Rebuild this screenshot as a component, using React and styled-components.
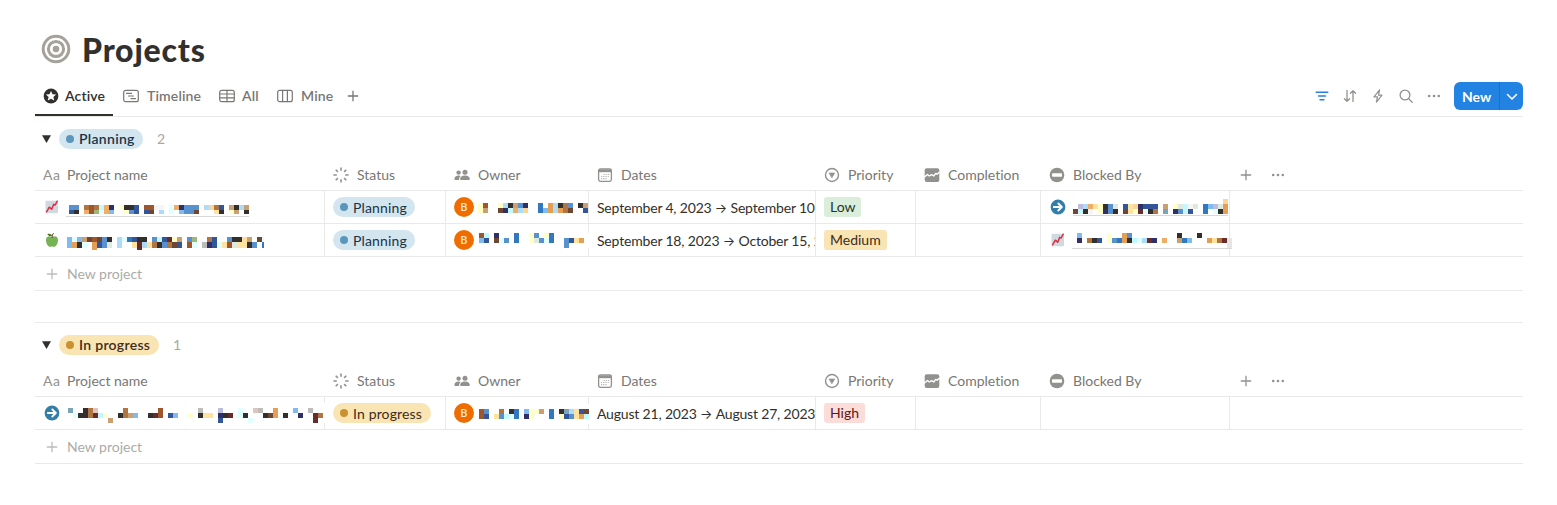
import styled, { createGlobalStyle } from "styled-components";

const GlobalStyle = createGlobalStyle`
  * { box-sizing: border-box; }
  body {
    margin: 0;
    background: #ffffff;
    color: #32302c;
    font-family: Lato, "Open Sans", sans-serif;
    font-size: 14px;
    font-variant-ligatures: none;
  }
  svg { display: block; flex-shrink: 0; }
`;

const Page = styled.main`
  padding: 27px 34px 0 35px;
  height: 505px;
  overflow: hidden;
`;

const TitleRow = styled.header`
  display: flex;
  align-items: center;
  gap: 11px;
  height: 49px;
  padding: 0 0 5px 6px;
`;

const Title = styled.h1`
  margin: 0;
  padding-top: 2px;
  font-size: 32px;
  line-height: 40px;
  font-weight: 900;
  letter-spacing: 0.8px;
`;

const Toolbar = styled.div`
  display: flex;
  justify-content: space-between;
  height: 41px;
  border-bottom: 1px solid #e9e9e7;
`;

const Tabs = styled.nav`
  display: flex;
  margin-bottom: -1px;
`;

const Tab = styled.div`
  display: flex;
  align-items: center;
  gap: ${({ $gap }) => $gap || 8}px;
  width: ${({ $width }) => $width}px;
  margin-left: ${({ $offset }) => $offset || 0}px;
  padding: 1px 0 0 8px;
  height: 40px;
  color: ${({ $active }) => ($active ? "#32302c" : "#787774")};
  border-bottom: 2px solid ${({ $active }) => ($active ? "#32302c" : "transparent")};
  font-weight: 600;
  letter-spacing: 0.15px;
`;

const Actions = styled.div`
  display: flex;
  align-items: center;
  gap: 12px;
  height: 40px;
  color: #91918e;
`;

const NewButton = styled.div`
  display: flex;
  width: 69px;
  height: 28px;
  border-radius: 6px;
  overflow: hidden;
  background: #2383e2;
  color: #ffffff;
  font-weight: 700;
  line-height: 29px;
`;

const NewLabel = styled.span`
  width: 46px;
  padding-left: 8px;
  border-right: 1px solid #1e70c2;
`;

const NewArrow = styled.span`
  display: flex;
  flex: 1;
  align-items: center;
  justify-content: center;
  padding-top: 2px;
`;

const Group = styled.section`
  height: 206px;
  border-bottom: ${({ $last }) => ($last ? "0" : "1px solid #e9e9e7")};
`;

const GroupHeader = styled.div`
  display: flex;
  align-items: center;
  height: 43px;
  padding-left: 6px;
`;

const Count = styled.span`
  margin-left: 14px;
  color: #a8a7a4;
`;

const tones = {
  blue: { bg: "#d3e5ef", dot: "#5b97bd", text: "#183347" },
  yellow: { bg: "#f9e4b3", dot: "#cb912f", text: "#402c1b" },
  green: { bg: "#dbeddb", text: "#1c3829" },
  amber: { bg: "#f9e4b3", text: "#402c1b" },
  red: { bg: "#fcdcd9", text: "#5d1715" },
};

const Pill = styled.span`
  display: inline-flex;
  align-items: center;
  gap: 5px;
  height: 20px;
  width: ${({ $width }) => $width}px;
  margin-left: ${({ $offset }) => $offset || 0}px;
  padding-left: 7px;
  border-radius: 10px;
  white-space: nowrap;
  background: ${({ $tone }) => tones[$tone].bg};
  color: ${({ $tone }) => tones[$tone].text};
  font-weight: ${({ $strong }) => ($strong ? 600 : 400)};
  letter-spacing: ${({ $strong }) => ($strong ? 0.3 : 0.15)}px;

  &::before {
    content: "";
    width: 8px;
    height: 8px;
    border-radius: 50%;
    background: ${({ $tone }) => tones[$tone].dot};
  }
`;

const Tag = styled.span`
  height: 20px;
  width: ${({ $width }) => $width}px;
  padding-left: 6px;
  border-radius: 3px;
  line-height: 20px;
  background: ${({ $tone }) => tones[$tone].bg};
  color: ${({ $tone }) => tones[$tone].text};
`;

const columns = "290px 121px 143px 227px 100px 125px 189px 1fr";

const HeadRow = styled.div`
  display: grid;
  grid-template-columns: ${columns};
  height: 31px;
  border-bottom: 1px solid #e9e9e7;
  color: #787774;
`;

const HeadCell = styled.div`
  display: flex;
  align-items: center;
  gap: ${({ $gap }) => $gap || 8}px;
  padding: 0 0 1px ${({ $pad }) => $pad ?? 8}px;

  svg { color: #91918e; }
`;

const TypeGlyph = styled.span`
  width: 18px;
  color: #91918e;
  letter-spacing: 0.4px;
`;

const Row = styled.div`
  display: grid;
  grid-template-columns: ${columns};
  height: 33px;
  border-bottom: 1px solid #e9e9e7;
`;

const Cell = styled.div`
  display: flex;
  align-items: center;
  min-width: 0;
  padding-left: 8px;
  white-space: nowrap;
  border-right: ${({ $open }) => ($open ? "0" : "1px solid #e9e9e7")};
  overflow: ${({ $clip }) => ($clip ? "hidden" : "visible")};
`;

const DateText = styled.span`
  display: flex;
  gap: 4px;
  padding-top: 2px;
  line-height: 18px;
  letter-spacing: -0.18px;
`;

const DateArrow = styled.span`
  display: flex;
  justify-content: center;
  width: 11px;
  font-family: Inter, sans-serif;
  font-size: 13px;
  letter-spacing: 0;
`;

const Avatar = styled.span`
  display: flex;
  align-items: center;
  justify-content: center;
  flex-shrink: 0;
  width: 20px;
  height: 20px;
  border-radius: 50%;
  background: #ef6c00;
  color: #ffe4cc;
  font-family: Roboto, sans-serif;
  font-size: 11px;
  font-weight: 500;
`;

const Redacted = styled.span`
  position: relative;
  z-index: 1;
  align-self: flex-start;
  flex-shrink: 0;
  height: ${({ $height }) => $height || 22}px;
  margin-top: ${({ $top }) => $top}px;
  margin-left: ${({ $left }) => $left}px;
  padding: ${({ $inset }) => $inset || "0"};
  background: ${({ $cover }) => ($cover ? "#ffffff" : "transparent")};
  border-bottom: ${({ $underline }) => ($underline ? "1px solid #d9d8d6" : "0")};
`;

const NewRow = styled.div`
  display: flex;
  align-items: center;
  gap: 9px;
  height: 34px;
  padding-left: 11px;
  border-bottom: 1px solid #e9e9e7;
  color: #acaba9;

  svg { color: #bdbcba; }
`;

const palette = {
  k: "#322f2c", b: "#5791d0", B: "#3278c0", n: "#303068", N: "#33569b",
  l: "#80bbf0", c: "#c2f8ff", C: "#e0ffff", o: "#f0ad66", O: "#e49f55",
  p: "#fbd49a", r: "#b07540", R: "#a0562b", d: "#6f4631", m: "#682d2a",
  y: "#ffffc8", Y: "#ffe2a0", g: "#9db878", e: "#dfe9e0", s: "#aedcf8",
  t: "#cba070", w: "#f8f4f4", x: "#bcbcb8", z: "#bcbcde", q: "#78a6b8",
  i: "#dfc5bd", a: "#e6e6e4",
};

// Each string is one line of 5px blocks, a dot leaves the block empty.
function Mosaic({ lines, tops = [0, 5, 10], width }) {
  return (
    <svg width={width || lines[0].length * 5} height={tops[tops.length - 1] + 5} shapeRendering="crispEdges">
      {lines.map((line, y) =>
        line.split("").map((code, x) =>
          code === "." ? null : (
            <rect
              key={`${x}-${y}`}
              x={x * 5}
              y={tops[y]}
              width="5"
              height={(tops[y + 1] ?? tops[y] + 5) - tops[y]}
              fill={palette[code]}
            />
          )
        )
      )}
    </svg>
  );
}

const Svg = ({ size = 16, height, children, ...rest }) => (
  <svg
    width={size}
    height={height || size}
    viewBox={`0 0 ${size} ${height || size}`}
    fill="none"
    stroke="currentColor"
    strokeWidth="1.3"
    strokeLinecap="round"
    strokeLinejoin="round"
    {...rest}
  >
    {children}
  </svg>
);

const TargetIcon = () => (
  <Svg size={30} stroke="#a5a299" strokeWidth="3">
    <circle cx="15" cy="15" r="12.8" />
    <circle cx="15" cy="15" r="7.6" />
    <circle cx="15" cy="15" r="3.3" fill="#a5a299" stroke="none" />
  </Svg>
);

const StarIcon = () => (
  <Svg stroke="none">
    <circle cx="8" cy="8" r="7.4" fill="#32302c" />
    <path d="M8 2.9l1.5 3.3 3.6.4-2.7 2.4.8 3.6L8 10.8l-3.2 1.8.8-3.6-2.7-2.4 3.6-.4z" fill="#fff" />
  </Svg>
);

const TimelineIcon = () => (
  <Svg strokeWidth="1.2">
    <rect x="0.7" y="2.3" width="14.6" height="11.4" rx="2" />
    <path d="M3.5 5.4h5M5.5 8h5M8 10.6h4.5" />
  </Svg>
);

const TableIcon = () => (
  <Svg strokeWidth="1.2">
    <rect x="0.7" y="2.3" width="14.6" height="11.4" rx="2" />
    <path d="M.8 6h14.4M.8 9.8h14.4M8 2.4v11.2" />
  </Svg>
);

const BoardIcon = () => (
  <Svg strokeWidth="1.2">
    <rect x="0.7" y="2.3" width="14.6" height="11.4" rx="2" />
    <path d="M5.6 2.4v11.2M10.4 2.4v11.2" />
  </Svg>
);

const PlusIcon = () => (
  <Svg size={12} strokeLinecap="butt">
    <path d="M6 .8v10.4M.8 6h10.4" />
  </Svg>
);

const FilterIcon = () => (
  <Svg stroke="#2383e2" strokeWidth="1.4">
    <path d="M2.2 4.2h11.6M4.5 8h7M6 11.8h4" />
  </Svg>
);

const SortIcon = () => (
  <Svg strokeWidth="1.3">
    <path d="M5 2.5v10.8M2.4 10.7L5 13.3l2.6-2.6M11 13.5V2.7M8.4 5.3L11 2.7l2.6 2.6" />
  </Svg>
);

const BoltIcon = () => (
  <Svg strokeWidth="1.2">
    <path d="M9.6 1.8L4 8.9h3.5l-1.1 5.3L12 7.1H8.5z" />
  </Svg>
);

const SearchIcon = () => (
  <Svg strokeWidth="1.3">
    <circle cx="7" cy="7" r="4.9" />
    <path d="M10.6 10.6l3.6 3.6" />
  </Svg>
);

const DotsIcon = () => (
  <Svg stroke="none" fill="currentColor">
    <circle cx="3.2" cy="8" r="1.3" />
    <circle cx="8" cy="8" r="1.3" />
    <circle cx="12.8" cy="8" r="1.3" />
  </Svg>
);

const StatusIcon = () => (
  <Svg strokeWidth="1.6" strokeLinecap="butt">
    <path d="M8 .4v3.4M8 12.2v3.4M.4 8h3.4M12.2 8h3.4M2.7 2.7l2.2 2.2M11.1 11.1l2.2 2.2M2.7 13.3l2.2-2.2M11.1 4.9l2.2-2.2" />
  </Svg>
);

const PeopleIcon = () => (
  <Svg stroke="none" fill="currentColor">
    <circle cx="4.6" cy="5.6" r="2.2" />
    <circle cx="11" cy="5.2" r="2.5" />
    <path d="M.4 12.2c0-2.2 1.7-3.6 4.2-3.6.8 0 1.5.2 2.1.5-1 .8-1.6 1.9-1.7 3.8H1.2c-.5 0-.8-.2-.8-.7zM6 12.1c0-2.3 2-3.7 5-3.7s4.9 1.4 4.9 3.7c0 .5-.3.8-.8.8H6.8c-.5 0-.8-.3-.8-.8z" />
  </Svg>
);

const CalendarIcon = () => (
  <Svg strokeWidth="1.3">
    <rect x="1.6" y="2" width="12.8" height="12.3" rx="1.8" />
    <path d="M1.6 3.9h12.8" strokeWidth="2.6" strokeLinecap="butt" />
    <path d="M6.5 7.5h6M4 9.5h8.5M4 11.7h6" strokeWidth="1.2" strokeDasharray="1.2 1" strokeLinecap="butt" opacity="0.7" />
  </Svg>
);

const SelectIcon = () => (
  <Svg strokeWidth="1.4">
    <circle cx="8" cy="8" r="6.5" />
    <path d="M5.4 6.1h5.2L8 10.4z" fill="currentColor" strokeWidth="0.8" />
  </Svg>
);

const RollupIcon = () => (
  <Svg stroke="none">
    <rect x="0.7" y="1.3" width="14.6" height="13.7" rx="2" fill="currentColor" />
    <path d="M.7 9.8L3.4 7.5l1.9 1.5 2.4-1.3 2 1.3 2-2.6 1.4.8 2.2-2" stroke="#fff" strokeWidth="1.4" />
  </Svg>
);

const BlockedIcon = () => (
  <Svg stroke="none">
    <circle cx="8" cy="8" r="7.3" fill="currentColor" />
    <rect x="3" y="6.2" width="10" height="3.6" rx="0.8" fill="#fff" />
  </Svg>
);

const ChartEmoji = () => (
  <Svg size={14} strokeWidth="1.5">
    <rect x="0.5" y="0.8" width="12.5" height="12.4" rx="1" fill="#cfd9df" stroke="none" />
    <path d="M1.6 11.8l2.7-4.6 2.4 2 2-4.8 1.5.6 2-3.8" stroke="#dd2e44" />
  </Svg>
);

const AppleEmoji = () => (
  <Svg size={14} stroke="none">
    <path d="M7 4c1.7-1.2 6-1.4 6 3 0 3.4-2 6.8-4 6.8-.9 0-1.2-.4-2-.4s-1.1.4-2 .4c-2 0-4-3.4-4-6.8 0-4.400 4.300-4.200 6-3z" fill="#77b255" />
    <path d="M7.2 4.4C7 2.8 7.4 1.5 8.3.5" stroke="#662113" strokeWidth="1" />
    <path d="M2.4 1.2c1.8-.8 4-.1 4.800 1.800-2 .4-3.900-.2-4.800-1.800z" fill="#3e721d" />
  </Svg>
);

const ArrowEmoji = () => (
  <Svg strokeWidth="1.8">
    <circle cx="8" cy="8" r="7.4" fill="#337ea9" stroke="none" />
    <path d="M3.8 8h8M8.3 4.5L11.9 8l-3.6 3.5" stroke="#fff" />
  </Svg>
);

const headings = [
  { label: "Status", Icon: StatusIcon },
  { label: "Owner", Icon: PeopleIcon },
  { label: "Dates", Icon: CalendarIcon },
  { label: "Priority", Icon: SelectIcon },
  { label: "Completion", Icon: RollupIcon },
  { label: "Blocked By", Icon: BlockedIcon },
];

const TableHead = () => (
  <HeadRow>
    <HeadCell $gap={6}><TypeGlyph>Aa</TypeGlyph>Project name</HeadCell>
    {headings.map(({ label, Icon }) => (
      <HeadCell key={label}><Icon />{label}</HeadCell>
    ))}
    <HeadCell $pad={10} $gap={18}>
      <PlusIcon />
      <DotsIcon />
    </HeadCell>
  </HeadRow>
);

const planning = [
  {
    Icon: ChartEmoji,
    name: {
      lines: ["bb.rRrcon.ykkN.RRww.Conbbb.sprN.tkst", "Nk.oRgCol..ybN.Nd.s.C.lbbd...Yk.yt.k"],
      tops: [0, 5, 9], left: 6, top: 11, inset: "3px 0 0 3px", height: 15, underline: true,
    },
    owner: { lines: ["yR..ysktbn..B.Oskrb.kt", "yt..dncosp..BlOsOrd..N"], left: 4, top: 12, height: 10 },
    dates: ["September 4, 2023", "September 10, 2023"],
    tag: ["Low", "green", 37],
    blocked: {
      Icon: ArrowEmoji,
      lines: ["..............................p", ".zsoYykbe.NYpnNNN.t.yecwe.BlzeO", "dckw.ynbk.dYymCkr.q.nbcN..B.CkO"],
      left: 7, top: 8, height: 17, underline: true,
    },
  },
  {
    Icon: AppleEmoji,
    name: {
      lines: ["lCltdRdbk.sCBNkk.bcNmyt.bg..rN..bkkYt.dC", "lOkC.ONbe.s..YmsYrkbrdN.RC.xnNCYReYYkb.B", ".....O........m........................."],
      tops: [0, 5, 11, 13], left: 7, top: 13, height: 15, width: 197,
    },
    owner: {
      lines: ["Rc.n...B..yb.yB......", "lN.dCb.B..yebCB..bNYO", ".................b..."],
      left: 5, top: 9, height: 15, cover: true, inset: "0 5px 0 0",
    },
    dates: ["September 18, 2023", "October 15, 2023"],
    tag: ["Medium", "amber", 63],
    blocked: {
      Icon: ChartEmoji,
      lines: [".l.....y..Ob.........k...k......", ".n.rkN.ybBOkcCsmn.o..tBl...OYrma", "...............................a"],
      left: 6, top: 9, height: 16, underline: true,
    },
  },
];

const inProgress = [
  {
    Icon: ArrowEmoji,
    name: {
      lines: [
        "q..kri.....r......R.......x...z...C..ix..O...l..x..",
        ".Ckkrmcy..krtl..kmR.Nl..y.kYY.nkm.Ck...kdO.k..n..mr",
        "........t.....................N.....C............m.",
      ],
      left: 8, top: 6, height: 20, inset: "5px 2px 0 0", cover: true,
    },
    owner: { lines: ["Rb..r.kB.lyyt.B.kqsYNd", "RN.YbcCB.ny...B.yNbYOc"], left: 5, top: 7, height: 20, inset: "5px 1px 0 0", cover: true },
    dates: ["August 21, 2023", "August 27, 2023"],
    tag: ["High", "red", 41],
  },
];

const Hidden = ({ data }) => (
  <Redacted
    $left={data.left}
    $top={data.top}
    $height={data.height}
    $inset={data.inset}
    $cover={data.cover}
    $underline={data.underline}
  >
    <Mosaic lines={data.lines} tops={data.tops} width={data.width} />
  </Redacted>
);

const IconSlot = styled.span`
  display: flex;
  justify-content: center;
  width: 16px;
  margin-left: 1px;
  flex-shrink: 0;
`;

function ProjectGroup({ label, tone, width, rows, last }) {
  return (
    <Group $last={last}>
      <GroupHeader>
        <Svg size={10} height={8} stroke="none"><path d="M1 .3h9L5.5 8z" fill="#32302c" /></Svg>
        <Pill $tone={tone} $width={width.header} $offset={8} $strong>{label}</Pill>
        <Count>{rows.length}</Count>
      </GroupHeader>
      <TableHead />
      {rows.map(({ Icon, name, owner, dates, tag, blocked }) => (
        <Row key={dates[0]}>
          <Cell><IconSlot><Icon /></IconSlot><Hidden data={name} /></Cell>
          <Cell><Pill $tone={tone} $width={width.cell}>{label}</Pill></Cell>
          <Cell><Avatar>B</Avatar><Hidden data={owner} /></Cell>
          <Cell $clip>
            <DateText>
              <span>{dates[0]}</span>
              <DateArrow>→</DateArrow>
              <span>{dates[1]}</span>
            </DateText>
          </Cell>
          <Cell><Tag $tone={tag[1]} $width={tag[2]}>{tag[0]}</Tag></Cell>
          <Cell />
          <Cell>
            {blocked && (
              <>
                <IconSlot><blocked.Icon /></IconSlot>
                <Hidden data={blocked} />
              </>
            )}
          </Cell>
          <Cell $open />
        </Row>
      ))}
      <NewRow><PlusIcon />New project</NewRow>
    </Group>
  );
}

export default function App() {
  return (
    <>
      <GlobalStyle />
      <Page>
        <TitleRow>
          <TargetIcon />
          <Title>Projects</Title>
        </TitleRow>
        <Toolbar>
          <Tabs>
            <Tab $active $width={78} $gap={6}><StarIcon />Active</Tab>
            <Tab $offset={2} $width={96}><TimelineIcon />Timeline</Tab>
            <Tab $width={58} $gap={7}><TableIcon />All</Tab>
            <Tab $width={70}><BoardIcon />Mine</Tab>
            <Tab $width={30}><PlusIcon /></Tab>
          </Tabs>
          <Actions>
            <FilterIcon />
            <SortIcon />
            <BoltIcon />
            <SearchIcon />
            <DotsIcon />
            <NewButton>
              <NewLabel>New</NewLabel>
              <NewArrow>
                <Svg size={12} height={8} strokeWidth="1.6"><path d="M1.5 1.5L6 6l4.5-4.5" /></Svg>
              </NewArrow>
            </NewButton>
          </Actions>
        </Toolbar>
        <ProjectGroup label="Planning" tone="blue" width={{ header: 84, cell: 82 }} rows={planning} />
        <ProjectGroup label="In progress" tone="yellow" width={{ header: 100, cell: 98 }} rows={inProgress} last />
      </Page>
    </>
  );
}
